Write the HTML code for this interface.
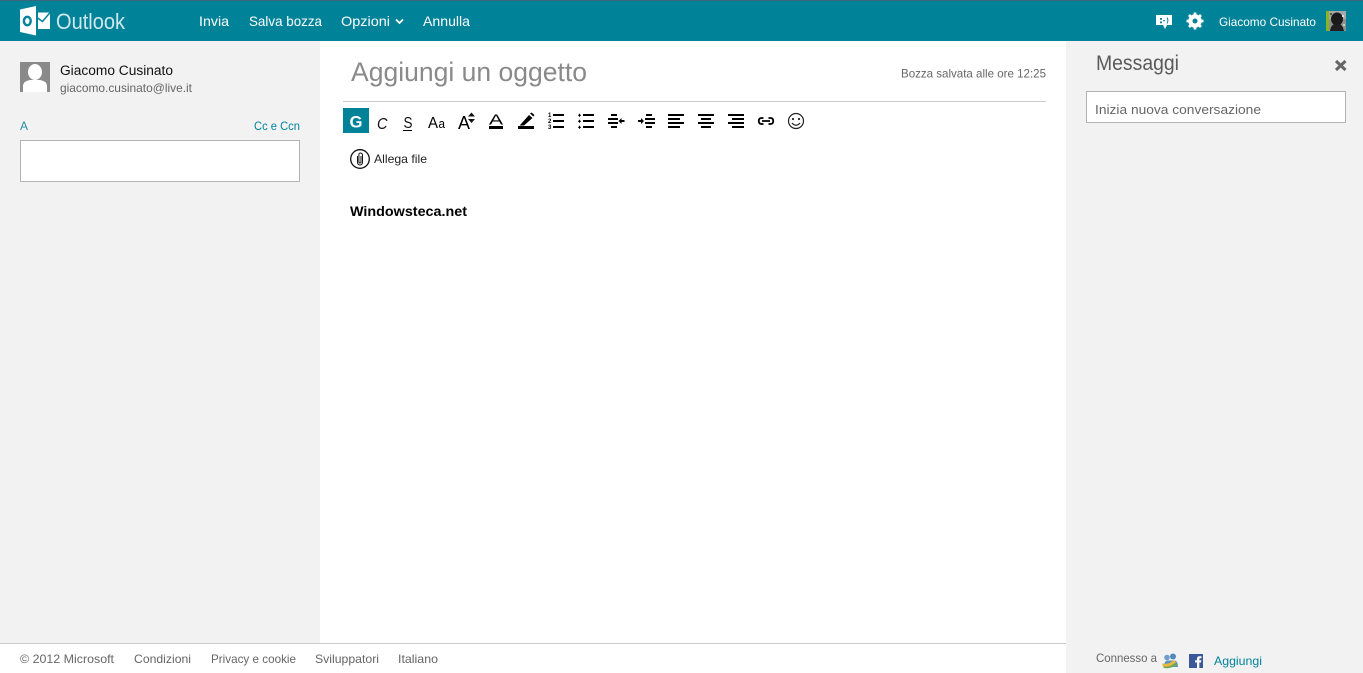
<!DOCTYPE html>
<html lang="it"><head><meta charset="utf-8"><title>Outlook</title>
<style>
html,body{margin:0;padding:0;width:1363px;height:673px;overflow:hidden;background:#fff}
svg{display:block}
text{font-family:"Liberation Sans",sans-serif;font-size:12px;fill:#666}
</style></head><body>
<svg width="1363" height="673" viewBox="0 0 1363 673" xmlns="http://www.w3.org/2000/svg">
<rect width="1363" height="673" fill="#fff"/>
<!-- panels -->
<rect x="0" y="41" width="320" height="602" fill="#f2f2f2"/>
<rect x="1066" y="41" width="297" height="632" fill="#f2f2f2"/>
<rect x="0" y="643" width="1066" height="1" fill="#ccc"/>
<!-- header -->
<rect width="1363" height="41" fill="#008299"/>
<rect width="1363" height="1" fill="#3d6378"/>
<path d="M20 9.500 36 6V35.500L20 32Z" fill="#fff"/>
<ellipse cx="27.300" cy="21" rx="3.400" ry="4.200" fill="none" stroke="#008299" stroke-width="2.400"/>
<rect x="38" y="12.500" width="12" height="16.500" fill="#fff"/>
<path d="M37.500 18 42.500 21.500 50.500 12" fill="none" stroke="#008299" stroke-width="1.500"/>
<text x="56" y="29" style="font-size:22px;fill:#cfe8ed" textLength="69" lengthAdjust="spacingAndGlyphs">Outlook</text>
<text x="199" y="26" style="font-size:14px;fill:#fff" textLength="30" lengthAdjust="spacingAndGlyphs">Invia</text>
<text x="249" y="26" style="font-size:14px;fill:#fff" textLength="73" lengthAdjust="spacingAndGlyphs">Salva bozza</text>
<text x="341" y="26" style="font-size:14px;fill:#fff" textLength="49" lengthAdjust="spacingAndGlyphs">Opzioni</text>
<text x="423" y="26" style="font-size:14px;fill:#fff" textLength="47" lengthAdjust="spacingAndGlyphs">Annulla</text>
<path d="M396 19.500 399.500 23 403 19.500" fill="none" stroke="#fff" stroke-width="1.800"/>
<!-- chat icon -->
<path d="M1156 15H1172V25H1167L1165 29 1163 25H1156Z" fill="#fff"/>
<path d="M1160 18h2v1.800h-2zM1160 21.500h2v1.800h-2zM1163 20.300h2v1h-2z" fill="#008299"/>
<path d="M1167 17.500q1.800 3 0 6" fill="none" stroke="#008299" stroke-width="1"/>
<!-- gear -->
<circle cx="1195" cy="21" r="5" fill="none" stroke="#fff" stroke-width="3.400"/>
<path d="M1195 12.500V29.500M1186.500 21H1203.500M1189 15 1201 27M1201 15 1189 27" stroke="#fff" stroke-width="2.800"/>
<circle cx="1195" cy="21" r="2.500" fill="#008299"/>
<text x="1219" y="26" style="font-size:12px;fill:#fff" textLength="97" lengthAdjust="spacingAndGlyphs">Giacomo Cusinato</text>
<!-- top avatar -->
<rect x="1326" y="11" width="3" height="20" fill="#86b51e"/>
<rect x="1329" y="11" width="17" height="20" fill="#8f8f8f"/>
<rect x="1329" y="11" width="17" height="8" fill="#a8a8a8"/>
<ellipse cx="1337" cy="19" rx="6" ry="6.500" fill="#1a1a1a"/>
<path d="M1330 31Q1331 24 1336 24L1340 24Q1343 26 1344 31Z" fill="#1f1f1f"/>
<rect x="1342" y="15" width="2" height="2" fill="#ddd"/><rect x="1343" y="24" width="2" height="2" fill="#ccc"/><rect x="1330" y="13" width="2" height="2" fill="#555"/>
<!-- left user -->
<rect x="20" y="62" width="30" height="30" fill="#8a8a8a"/>
<ellipse cx="35" cy="72" rx="7" ry="8" fill="#fff"/>
<path d="M23 92V85Q24 81 30 80H40Q46 81 47 85V92Z" fill="#fff"/>
<text x="60" y="75" style="font-size:13.500px;fill:#111" textLength="113" lengthAdjust="spacingAndGlyphs">Giacomo Cusinato</text>
<text x="60" y="92" style="font-size:12px;fill:#666" textLength="132" lengthAdjust="spacingAndGlyphs">giacomo.cusinato@live.it</text>
<text x="20" y="130" style="font-size:12px;fill:#2a8ba0" textLength="8" lengthAdjust="spacingAndGlyphs">A</text>
<text x="254" y="130" style="font-size:12px;fill:#00829b" textLength="46" lengthAdjust="spacingAndGlyphs">Cc e Ccn</text>
<rect x="20.500" y="140.500" width="279" height="41" fill="#fff" stroke="#b3b3b3"/>
<!-- subject -->
<text x="351" y="81" style="font-size:27px;fill:#8a8a8a" textLength="236" lengthAdjust="spacingAndGlyphs">Aggiungi un oggetto</text>
<text x="901" y="77.500" style="font-size:12px;fill:#666" textLength="145" lengthAdjust="spacingAndGlyphs">Bozza salvata alle ore 12:25</text>
<rect x="343" y="101" width="703" height="1" fill="#ccc"/>
<!-- toolbar -->
<rect x="343" y="108" width="26" height="25" fill="#008299"/>
<text x="349.500" y="127.500" style="font-size:17px;font-weight:bold;fill:#fff" textLength="13" lengthAdjust="spacingAndGlyphs">G</text>
<text x="377" y="129" style="font-size:16px;font-style:italic;fill:#111" textLength="10.500" lengthAdjust="spacingAndGlyphs">C</text>
<text x="403.500" y="128" style="font-size:16px;fill:#111" textLength="9" lengthAdjust="spacingAndGlyphs">S</text>
<rect x="403" y="130" width="9" height="1" fill="#000"/>
<text x="428" y="128" style="font-size:16px;fill:#000" textLength="10" lengthAdjust="spacingAndGlyphs">A</text>
<text x="438.500" y="128" style="font-size:13px;fill:#000" textLength="6.500" lengthAdjust="spacingAndGlyphs">a</text>
<text x="458" y="129" style="font-size:18px;fill:#000" textLength="12" lengthAdjust="spacingAndGlyphs">A</text>
<path d="M471.500 112.500 475 116.500H468ZM468 119H475L471.500 123Z" fill="#111"/>
<text x="489" y="124.500" style="font-size:15px;fill:#000" textLength="14" lengthAdjust="spacingAndGlyphs">A</text>
<rect x="489" y="126" width="14" height="3" fill="#000"/>
<path d="M520.500 124.500 529 115 532.500 118 524 125.500 519.500 125.500Z" fill="#000"/>
<path d="M530 113.500 531.500 112.500 534.500 115 533.300 116.500Z" fill="#000"/>
<rect x="518" y="126" width="16" height="3" fill="#000"/>
<g fill="#000">
<!-- numbered list -->
<rect x="553" y="114" width="11" height="2"/><rect x="553" y="120" width="11" height="2"/><rect x="553" y="126" width="11" height="2"/>
<!-- bullets -->
<rect x="583" y="114" width="11" height="2"/><rect x="583" y="120" width="11" height="2"/><rect x="583" y="126" width="11" height="2"/>
<path d="M578 114.700h1v-1h1v1h1v1h-1v1h-1v-1h-1zM578 120.700h1v-1h1v1h1v1h-1v1h-1v-1h-1zM578 126.700h1v-1h1v1h1v1h-1v1h-1v-1h-1z"/>
<!-- indent -->
<rect x="611" y="114" width="6" height="2"/><rect x="608" y="118" width="10" height="2"/><rect x="608" y="122" width="10" height="2"/><rect x="611" y="126" width="6" height="2"/>
<path d="M618.500 121 621.500 118V120H624.500V122H621.500V124Z"/>
<!-- outdent -->
<rect x="646" y="114" width="6" height="2"/><rect x="645" y="118" width="10" height="2"/><rect x="645" y="122" width="10" height="2"/><rect x="646" y="126" width="6" height="2"/>
<path d="M644 121 641 118V120H638V122H641V124Z"/>
<!-- align -->
<rect x="668" y="114" width="16" height="2"/><rect x="668" y="118" width="12" height="2"/><rect x="668" y="122" width="16" height="2"/><rect x="668" y="126" width="12" height="2"/>
<rect x="698" y="114" width="16" height="2"/><rect x="701" y="118" width="10" height="2"/><rect x="698" y="122" width="16" height="2"/><rect x="701" y="126" width="10" height="2"/>
<rect x="728" y="114" width="16" height="2"/><rect x="732" y="118" width="12" height="2"/><rect x="728" y="122" width="16" height="2"/><rect x="732" y="126" width="12" height="2"/>
</g>
<text x="548" y="117" style="font-size:6px;font-weight:bold;fill:#000">1</text>
<text x="548" y="123" style="font-size:6px;font-weight:bold;fill:#000">2</text>
<text x="548" y="129" style="font-size:6px;font-weight:bold;fill:#000">3</text>
<!-- link -->
<path d="M763.500 118H761.500Q758.800 118 758.800 121T761.500 124H763.500M768.500 118H770.500Q773.200 118 773.200 121T770.500 124H768.500M762 121H770" fill="none" stroke="#000" stroke-width="1.800"/>
<!-- smile -->
<circle cx="796" cy="121" r="7.500" fill="none" stroke="#222" stroke-width="1.200"/>
<circle cx="793" cy="119" r="1.100" fill="#222"/><circle cx="799" cy="119" r="1.100" fill="#222"/>
<path d="M792 123Q796 127.500 800 123" fill="none" stroke="#222" stroke-width="1.200"/>
<!-- attach -->
<circle cx="360" cy="159" r="9.300" fill="none" stroke="#111" stroke-width="1.300"/>
<path d="M357.500 156V162Q357.500 165 360 165T362.500 162V155.500Q362.500 153 360.500 153T358.900 155.500V161.500Q358.900 163 360 163T361 161.500V156" fill="none" stroke="#111" stroke-width="1"/>
<text x="374" y="163" style="font-size:12px;fill:#222" textLength="53" lengthAdjust="spacingAndGlyphs">Allega file</text>
<!-- body -->
<text x="350" y="216" style="font-size:13.500px;font-weight:bold;fill:#000" textLength="117" lengthAdjust="spacingAndGlyphs">Windowsteca.net</text>
<!-- right -->
<text x="1096" y="70" style="font-size:21px;fill:#5a5a5a" textLength="83" lengthAdjust="spacingAndGlyphs">Messaggi</text>
<path d="M1336 61 1345.500 70M1345.500 61 1336 70" stroke="#666" stroke-width="3"/>
<rect x="1086.500" y="91.500" width="259" height="31" fill="#fff" stroke="#b3b3b3"/>
<text x="1095" y="114" style="font-size:13px;fill:#666" textLength="166" lengthAdjust="spacingAndGlyphs">Inizia nuova conversazione</text>
<!-- footer -->
<text x="20" y="663" textLength="94" lengthAdjust="spacingAndGlyphs">© 2012 Microsoft</text>
<text x="134" y="663" textLength="57" lengthAdjust="spacingAndGlyphs">Condizioni</text>
<text x="211" y="663" textLength="85" lengthAdjust="spacingAndGlyphs">Privacy e cookie</text>
<text x="315" y="663" textLength="64" lengthAdjust="spacingAndGlyphs">Sviluppatori</text>
<text x="398" y="663" textLength="40" lengthAdjust="spacingAndGlyphs">Italiano</text>
<text x="1096" y="662" textLength="61" lengthAdjust="spacingAndGlyphs">Connesso a</text>
<!-- messenger icon -->
<circle cx="1167" cy="657.500" r="2.800" fill="#6fa0c8"/><circle cx="1173" cy="656.500" r="3" fill="#4f8abf"/>
<path d="M1164 667Q1164 660.500 1168 660.500H1174Q1178 660.500 1178 667Z" fill="#5f95c0"/>
<path d="M1162 663.500Q1169 665 1174 660L1176 662Q1170 668 1163 666.500Z" fill="#e8b93a"/>
<path d="M1163 666.500Q1169 668 1176 663L1177.500 665Q1170 669 1164 668Z" fill="#6aa84f"/>
<!-- fb -->
<rect x="1189" y="654" width="14" height="14" fill="#3b5998"/>
<path d="M1197 668V662.500H1195V660.300H1197V658.800Q1197 656.300 1199.500 656.300H1201.500V658.300H1200.200Q1199.300 658.300 1199.300 659.200V660.300H1201.400L1201 662.500H1199.300V668Z" fill="#fff"/>
<text x="1214" y="665" style="font-size:12px;fill:#00829b" textLength="48" lengthAdjust="spacingAndGlyphs">Aggiungi</text>
</svg>
</body></html>
